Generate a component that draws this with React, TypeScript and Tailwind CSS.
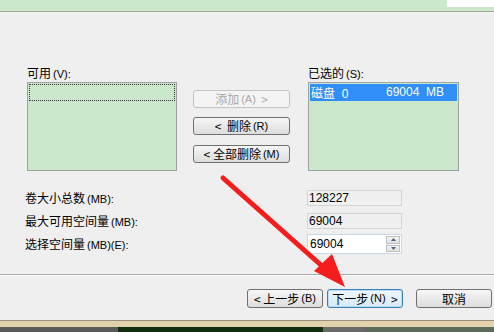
import React from "react";

const cjk = { fontFamily: '"Noto Sans CJK SC", "Liberation Sans", sans-serif' };
const num = { fontFamily: '"Liberation Sans", "Noto Sans CJK SC", sans-serif' };

function K({ children }: { children: React.ReactNode }) {
  return (
    <span className="text-[11px] ml-[2px]" style={num}>
      {children}
    </span>
  );
}

function Btn({ children, disabled, focused, className = "" }: { children: React.ReactNode; disabled?: boolean; focused?: boolean; className?: string }) {
  const base = "flex items-center justify-center rounded-[3px] text-[12px] leading-none whitespace-pre ";
  const look = disabled
    ? "border border-[#c4c4c4] bg-[#f4f4f4] text-[#a8a8a8]"
    : focused
    ? "border border-[#3c7fb1] bg-gradient-to-b from-[#f0f7fd] to-[#d7e9f7] text-black shadow-[inset_0_0_0_1px_#b8dcf5]"
    : "border border-[#707070] bg-gradient-to-b from-[#f6f6f6] to-[#dddddd] text-black";
  return (
    <div className={base + look + " " + className} style={cjk}>
      {children}
    </div>
  );
}

export default function App() {
  return (
    <div className="relative w-[494px] h-[332px] overflow-hidden bg-[#efefef] flex flex-col" style={cjk}>
      {/* top strip */}
      <div className="h-[12px] flex bg-[#cbe8cc] border-b border-[#9ea69e]">
        <div className="flex-1" />
        <div className="w-[47px] h-[7px] bg-white" />
      </div>

      {/* list section */}
      <div className="flex pt-[54px] pl-[27px]">
        <div className="w-[150px]">
          <div className="h-[16px] text-[12px] leading-[14px] text-black">可用<K>(V):</K></div>
          <div className="h-[89px] bg-[#cce8cc] border border-[#9ba39b] p-[1px]">
            <div className="h-[17px] border border-dotted border-[#333]" />
          </div>
        </div>
        <div className="w-[97px] ml-[16px] pt-[24px] flex flex-col">
          <Btn disabled className="h-[18px]">添加<K>(A)</K>{"  >"}</Btn>
          <Btn className="h-[18px] mt-[9px]">{"<  "}删除<K>(R)</K></Btn>
          <Btn className="h-[18px] mt-[10px]">{"< "}全部删除<K>(M)</K></Btn>
        </div>
        <div className="w-[151px] ml-[18px]">
          <div className="h-[16px] text-[12px] leading-[14px] text-black">已选的<K>(S):</K></div>
          <div className="h-[89px] bg-[#cce8cc] border border-[#9ba39b] p-[1px]">
            <div className="h-[17px] bg-[#2f8ef7] text-white text-[12px] leading-[17px] flex">
              <span className="w-[76px] pl-[1px] whitespace-pre">磁盘<span style={num}>  0</span></span>
              <span className="whitespace-pre" style={num}>69004  MB</span>
            </div>
          </div>
        </div>
      </div>

      {/* size rows */}
      <div className="flex flex-col pl-[25px] mt-[19px] text-[12px] text-black">
        <div className="flex items-center h-[16px]">
          <span className="w-[282px]">卷大小总数<K>(MB):</K></span>
          <div className="w-[95px] h-[16px] bg-[#f0f0f0] border border-[#d4d4d4] text-[12px] leading-[14px] pl-[1px]" style={num}>128227</div>
        </div>
        <div className="flex items-center h-[16px] mt-[7px]">
          <span className="w-[282px]">最大可用空间量<K>(MB):</K></span>
          <div className="w-[95px] h-[16px] bg-[#f0f0f0] border border-[#d4d4d4] text-[12px] leading-[14px] pl-[1px]" style={num}>69004</div>
        </div>
        <div className="flex items-center h-[20px] mt-[5px]">
          <span className="w-[282px]">选择空间量<K>(MB)(E):</K></span>
          <div className="w-[95px] h-[20px] bg-white border border-[#c8d8e8] flex">
            <span className="flex-1 text-[12px] leading-[18px] pl-[2px]" style={num}>69004</span>
            <div className="w-[16px] flex flex-col gap-[1px] p-[1px]">
              <div className="flex-1 bg-gradient-to-b from-[#f4f4f4] to-[#dedede] border border-[#c0c0c0] flex items-center justify-center">
                <svg width="5" height="3" viewBox="0 0 5 3"><path d="M0 3 L2.5 0 L5 3 Z" fill="#4d6185" /></svg>
              </div>
              <div className="flex-1 bg-gradient-to-b from-[#f4f4f4] to-[#dedede] border border-[#c0c0c0] flex items-center justify-center">
                <svg width="5" height="3" viewBox="0 0 5 3"><path d="M0 0 L2.5 3 L5 0 Z" fill="#4d6185" /></svg>
              </div>
            </div>
          </div>
        </div>
      </div>

      {/* separator */}
      <div className="mt-[20px] h-[2px] border-t border-[#a8a8a8] border-b border-b-white" />

      {/* bottom buttons */}
      <div className="flex mt-[13px] pl-[247px]">
        <Btn className="w-[76px] h-[19px]">{"< "}上一步<K>(B)</K></Btn>
        <Btn focused className="w-[76px] h-[19px] ml-[4px]">下一步<K>(N)</K>{"  >"}</Btn>
        <Btn className="w-[76px] h-[19px] ml-[13px]">取消</Btn>
      </div>

      <div className="flex-1" />

      {/* bottom taskbar strip */}
      <div className="h-[12px] flex flex-col">
        <div className="h-[1px] bg-[#9a8f7c]" />
        <div className="h-[6px] bg-[#e2d2ac]" />
        <div className="flex-1 flex">
          <div className="w-[118px] bg-[#5a5a5a]" />
          <div className="w-[205px] bg-[#12300f]" />
          <div className="w-[40px] bg-[#6a6a6a]" />
          <div className="flex-1 bg-[#5c6b5a]" />
        </div>
      </div>

      {/* red arrow overlay */}
      <svg className="absolute left-0 top-0 pointer-events-none" width="494" height="332" viewBox="0 0 494 332">
        <line x1="223" y1="178" x2="322" y2="266" stroke="#f41c1c" strokeWidth="5" strokeLinecap="round" />
        <polygon points="345,287 314,271 332,254" fill="#f41c1c" />
      </svg>
    </div>
  );
}
